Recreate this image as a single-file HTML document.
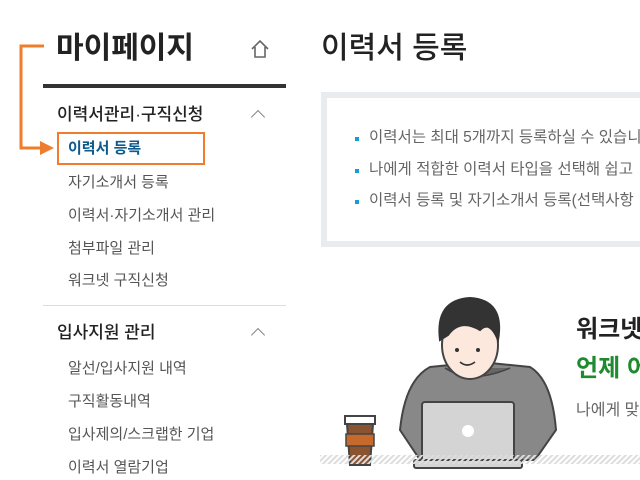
<!DOCTYPE html>
<html><head><meta charset="utf-8"><style>
*{margin:0;padding:0;box-sizing:border-box}
body{width:640px;height:480px;overflow:hidden;background:#fff;position:relative;font-family:"Liberation Sans","Noto Sans CJK KR",sans-serif}
.a{position:absolute;white-space:nowrap}
.it{position:absolute;left:68px;font-size:15px;color:#555;line-height:20px;white-space:nowrap}
.sec{position:absolute;left:57px;font-size:17px;color:#222;font-weight:500;line-height:22px;white-space:nowrap}
.chev{position:absolute;left:253px;width:10px;height:10px;border-left:1.5px solid #888;border-top:1.5px solid #888;transform:rotate(45deg)}
.bl{position:absolute;left:369px;font-size:15.5px;color:#666;line-height:20px;white-space:nowrap}
.bl:before{content:"";position:absolute;left:-14px;top:9px;width:4px;height:4px;background:#1a9ad6}
</style></head><body>
<svg class="a" style="left:0;top:0" width="60" height="170">
<polyline points="44,46 21,46 21,148 42,148" fill="none" stroke="#f07c2d" stroke-width="3"/>
<polygon points="40,141 54,148 40,155" fill="#f07c2d"/>
</svg>
<div class="a" style="left:56px;top:30px;font-size:30px;font-weight:bold;color:#222;line-height:38px">마이페이지</div>
<svg class="a" style="left:249px;top:38px" width="22" height="22"><path d="M3 11 L11 3 L19 11 M6 9 V19 H16 V9" fill="none" stroke="#666" stroke-width="1.6"/></svg>
<div class="a" style="left:43px;top:84px;width:243px;height:4px;background:#333"></div>
<div class="sec" style="top:104px">이력서관리·구직신청</div>
<div class="chev" style="top:112px"></div>
<div class="a" style="left:57px;top:132px;width:148px;height:33px;border:2px solid #f07c2d"></div>
<div class="it" style="top:139px;color:#0d5b8c;font-weight:bold">이력서 등록</div>
<div class="it" style="top:173px">자기소개서 등록</div>
<div class="it" style="top:206px">이력서·자기소개서 관리</div>
<div class="it" style="top:239px">첨부파일 관리</div>
<div class="it" style="top:271px">워크넷 구직신청</div>
<div class="a" style="left:43px;top:305px;width:243px;height:1px;background:#ddd"></div>
<div class="sec" style="top:322px">입사지원 관리</div>
<div class="chev" style="top:330px"></div>
<div class="it" style="top:359px">알선/입사지원 내역</div>
<div class="it" style="top:392px">구직활동내역</div>
<div class="it" style="top:425px">입사제의/스크랩한 기업</div>
<div class="it" style="top:458px">이력서 열람기업</div>

<div class="a" style="left:321px;top:30px;font-size:30px;font-weight:500;color:#222;line-height:38px">이력서 등록</div>
<div class="a" style="left:321px;top:92px;width:330px;height:155px;border:6px solid #e8ecef"></div>
<div class="bl" style="top:128px">이력서는 최대 5개까지 등록하실 수 있습니다</div>
<div class="bl" style="top:160px">나에게 적합한 이력서 타입을 선택해 쉽고</div>
<div class="bl" style="top:191px">이력서 등록 및 자기소개서 등록(선택사항</div>

<svg class="a" style="left:320px;top:290px" width="320" height="180">
<defs><pattern id="h" width="4" height="4" patternUnits="userSpaceOnUse" patternTransform="rotate(45)"><rect width="2" height="4" fill="#ddd"/></pattern></defs>
<path d="M100 170 L80 140 Q85 90 110 77 L160 72 L210 77 Q232 90 236 140 L215 170 Z" fill="#888" stroke="#444" stroke-width="2"/>
<path d="M125 78 Q150 95 190 78" fill="#666" stroke="#444" stroke-width="1.5"/>
<ellipse cx="150" cy="55" rx="28" ry="34" fill="#fde8de" stroke="#444" stroke-width="2"/>
<path d="M120 50 Q115 10 150 8 Q185 10 178 50 Q170 30 160 40 Q140 28 128 45 Z" fill="#333" stroke="#333" stroke-width="2"/>
<circle cx="137" cy="60" r="2" fill="#333"/><circle cx="158" cy="60" r="2" fill="#333"/>
<path d="M140 72 Q147 78 155 72" fill="none" stroke="#333" stroke-width="1.6"/>
<rect x="102" y="112" width="92" height="62" rx="3" fill="#d4d4d4" stroke="#444" stroke-width="2"/>
<circle cx="148" cy="141" r="6" fill="#fff"/>
<rect x="94" y="170" width="108" height="8" rx="2" fill="#d4d4d4" stroke="#444" stroke-width="2"/>
<rect x="25" y="126" width="30" height="8" fill="#fff" stroke="#444" stroke-width="2"/>
<path d="M27 134 L53 134 L50 175 L30 175 Z" fill="#8b5430" stroke="#444" stroke-width="2"/>
<rect x="26" y="144" width="28" height="12" fill="#c7692a" stroke="#444" stroke-width="1.5"/>
<rect x="0" y="165" width="320" height="9" fill="url(#h)"/>
</svg>
<div class="a" style="left:576px;top:314px;font-size:24px;font-weight:bold;color:#222;line-height:32px">워크넷</div>
<div class="a" style="left:576px;top:353px;font-size:24px;font-weight:bold;color:#1f8a2e;line-height:32px">언제 어</div>
<div class="a" style="left:576px;top:400px;font-size:16px;color:#666;line-height:22px">나에게 맞</div>
</body></html>
